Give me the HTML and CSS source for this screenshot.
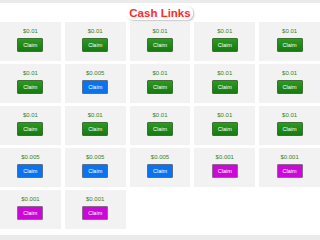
FILE: index.html
```html
<!DOCTYPE html>
<html lang="en">
<head>
    <meta charset="UTF-8">
    <meta name="viewport" content="width=device-width, initial-scale=1.0">
    <title>Cash Links</title>
    <link rel="stylesheet" href="styles.css">
</head>
<body>
    <div class="page">
        <h1 class="title"><span>Cash Links</span></h1>

        <div class="links">
            <div class="card"><p class="amount">$0.01</p><button class="claim green">Claim</button></div>
            <div class="card"><p class="amount">$0.01</p><button class="claim green">Claim</button></div>
            <div class="card"><p class="amount">$0.01</p><button class="claim green">Claim</button></div>
            <div class="card"><p class="amount">$0.01</p><button class="claim green">Claim</button></div>
            <div class="card"><p class="amount">$0.01</p><button class="claim green">Claim</button></div>

            <div class="card"><p class="amount">$0.01</p><button class="claim green">Claim</button></div>
            <div class="card"><p class="amount">$0.005</p><button class="claim blue">Claim</button></div>
            <div class="card"><p class="amount">$0.01</p><button class="claim green">Claim</button></div>
            <div class="card"><p class="amount">$0.01</p><button class="claim green">Claim</button></div>
            <div class="card"><p class="amount">$0.01</p><button class="claim green">Claim</button></div>

            <div class="card"><p class="amount">$0.01</p><button class="claim green">Claim</button></div>
            <div class="card"><p class="amount">$0.01</p><button class="claim green">Claim</button></div>
            <div class="card"><p class="amount">$0.01</p><button class="claim green">Claim</button></div>
            <div class="card"><p class="amount">$0.01</p><button class="claim green">Claim</button></div>
            <div class="card"><p class="amount">$0.01</p><button class="claim green">Claim</button></div>

            <div class="card"><p class="amount">$0.005</p><button class="claim blue">Claim</button></div>
            <div class="card"><p class="amount">$0.005</p><button class="claim blue">Claim</button></div>
            <div class="card"><p class="amount">$0.005</p><button class="claim blue">Claim</button></div>
            <div class="card"><p class="amount">$0.001</p><button class="claim purple">Claim</button></div>
            <div class="card"><p class="amount">$0.001</p><button class="claim purple">Claim</button></div>

            <div class="card"><p class="amount">$0.001</p><button class="claim purple">Claim</button></div>
            <div class="card"><p class="amount">$0.001</p><button class="claim purple">Claim</button></div>
        </div>
    </div>
</body>
</html>
```

FILE: styles.css
```css
body {
    font-family: "Liberation Sans", Arial, sans-serif;
    background-color: #ebebeb;
    margin: 0;
    padding: 3px 0 5px;
}
.page {
    background-color: #fff;
    padding-bottom: 6px;
}
.title {
    margin: 0;
    height: 19px;
    display: flex;
    justify-content: center;
    align-items: center;
    font-size: 11.5px;
    font-weight: bold;
    color: #ff2a2a;
}
.title span {
    background-color: #fff;
    padding: 0 2px;
    line-height: 14px;
    border-radius: 6px;
    box-shadow: 1px 1px 2px rgba(0, 0, 0, 0.25);
}
.links {
    display: grid;
    grid-template-columns: repeat(5, 1fr);
    column-gap: 4px;
    row-gap: 3px;
}
.card {
    background-color: #f2f2f2;
    height: 39px;
    display: flex;
    flex-direction: column;
    align-items: center;
    padding-top: 5px;
    box-sizing: border-box;
}
.amount {
    margin: 0 0 3px;
    font-size: 6px;
    line-height: 8px;
    color: #3a7f26;
}
.claim {
    width: 26px;
    height: 14px;
    padding: 0;
    font-family: inherit;
    font-size: 5.5px;
    color: #fff;
    border: 1px solid #777;
    border-radius: 1px;
    cursor: pointer;
}
.claim.green {
    background: linear-gradient(#2c9a20, #167a12);
    border-color: #3f6f35;
}
.claim.blue {
    background-color: #0a74f0;
    border-color: #5a6f8a;
}
.claim.purple {
    background-color: #cc08d8;
    border-color: #8a6a8c;
}
```
